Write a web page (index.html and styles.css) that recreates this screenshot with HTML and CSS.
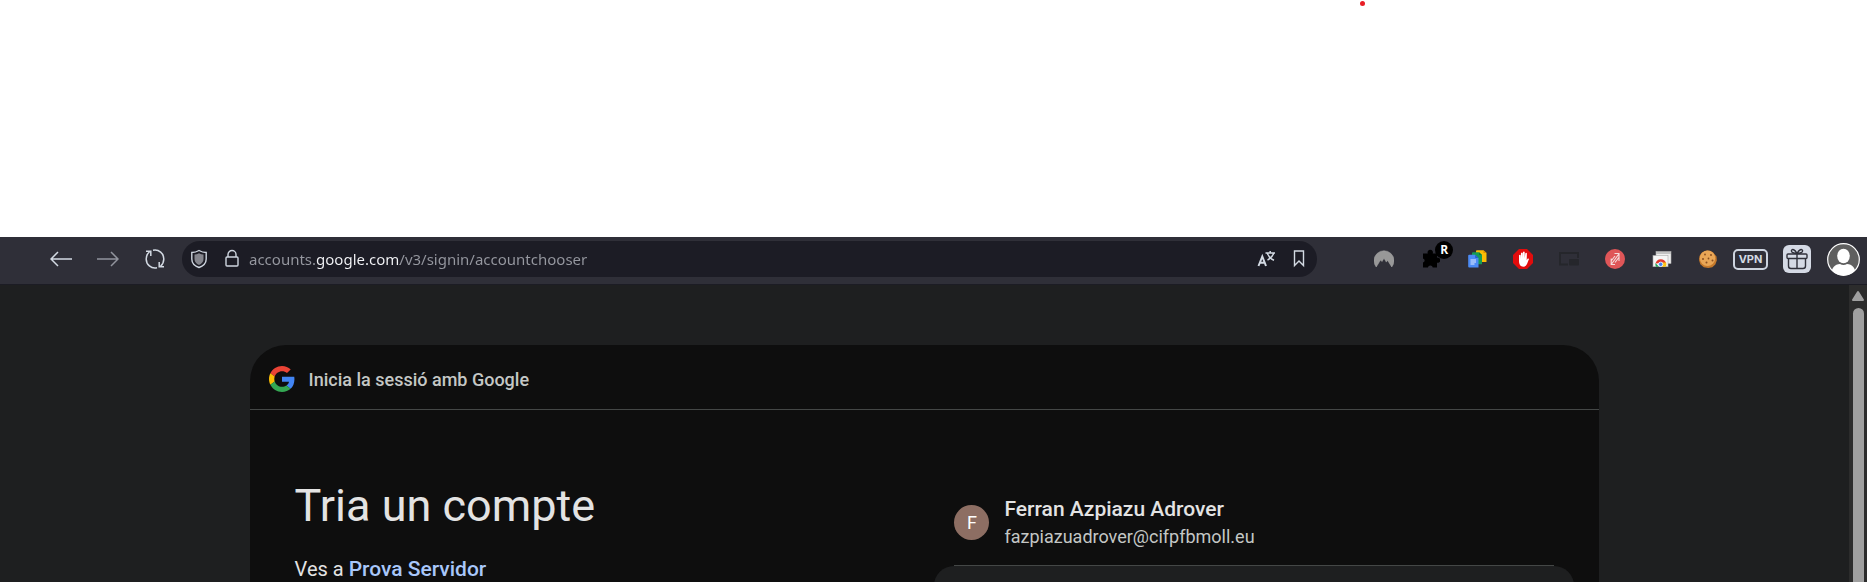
FILE: index.html
```html
<!DOCTYPE html>
<html lang="ca">
<head>
<meta charset="utf-8">
<title>Inicia la sessió</title>
<link rel="stylesheet" href="styles.css">
</head>
<body>
<div class="blank"><span class="dot"></span></div>
<header class="toolbar">
  <nav class="nav">
    <button class="icon" aria-label="Enrere"><svg width="22" height="20" viewBox="0 0 22 20" fill="none" stroke="#d3dae3" stroke-width="1.5"><path d="M22 10H1M8 3L1 10l7 7"/></svg></button>
    <button class="icon" aria-label="Endavant"><svg width="22" height="20" viewBox="0 0 22 20" fill="none" stroke="#91949d" stroke-width="1.5"><path d="M0 10h21M14 3l7 7-7 7"/></svg></button>
    <button class="icon" aria-label="Actualitza"><svg width="22" height="20" viewBox="0 0 22 20" fill="none" stroke="#d3dae3" stroke-width="1.5"><path d="M9 1.200C15 0 19.800 4.500 19.800 10c0 3-1.300 5.500-3.300 7.300M13 18.800C7 20 2.200 15.500 2.200 10c0-3 1.300-5.500 3.300-7.300M2 2.200h4.800V7M20 17.800h-4.800V13"/></svg></button>
  </nav>
  <div class="address">
    <button class="icon" aria-label="Protecció"><svg width="18" height="20" viewBox="0 0 18 20"><path d="M9 1.500c2.500 1.500 4.800 2 7.200 2V10c0 4-3 7-7.200 8.500C4.800 17 1.800 14 1.800 10V3.500c2.400 0 4.700-.5 7.200-2z" fill="none" stroke="#ced5df" stroke-width="1.400"/><path d="M9 4.300c1.600.8 3 1.200 4.500 1.300V10c0 2.800-1.700 4.700-4.500 6-2.800-1.300-4.500-3.200-4.500-6V5.600C6 5.500 7.400 5.100 9 4.300z" fill="#85868e"/></svg></button>
    <button class="icon lock" aria-label="Informació del lloc"><svg width="14" height="20" viewBox="0 0 14 20" fill="none" stroke="#ced5df" stroke-width="1.400"><rect x="1" y="8" width="12" height="9" rx="1"/><path d="M3 8V5.500a4 4 0 0 1 8 0V8"/></svg></button>
    <input class="url" type="text" aria-label="Adreça" value="accounts.google.com/v3/signin/accountchooser">
    <button class="icon translate" aria-label="Tradueix"><svg width="18" height="20" viewBox="0 0 18 20" fill="none" stroke="#d3dae3"><path d="M1.500 17L5.300 7.500 9 17M3 13.700h4.800" stroke-width="2"/><path d="M8.500 4H18M13.200 2v2M10.500 4.500c1 3 3.500 5.500 6.500 6.700M16.500 4.500c-1 3-3 5-6 6.700" stroke-width="1.500"/></svg></button>
    <button class="icon" aria-label="Afegeix a les adreces d'interès"><svg width="12" height="20" viewBox="0 0 12 20" fill="none" stroke="#d3dae3" stroke-width="1.400"><path d="M1.500 2h9v14.500L6 12l-4.500 4.500z"/></svg></button>
  </div>
  <div class="extensions">
    <button class="icon" aria-label="NordVPN"><svg width="20" height="20" viewBox="0 0 20 20"><path d="M2.200 18A10 10 0 1 1 17.800 18l-4.300-6.800-1.200 1.900L10 9.200 8 12.600l-1.500-1.500z" fill="#989898" stroke="#aaa" stroke-width=".5"/></svg></button>
    <button class="icon puzzle" aria-label="Extensió"><svg width="20" height="20" viewBox="0 0 20 20"><path d="M3 4.500h4.800a2.700 2.700 0 1 1 4.900 0H17v4.200a2.600 2.600 0 1 1 0 5V18.500h-4.200a2.500 2.500 0 0 0-4.900 0H3v-5a2.100 2.100 0 0 0 0-4.100z" fill="#000"/></svg><span class="badge">R</span></button>
    <button class="icon" aria-label="Documents"><svg width="20" height="20" viewBox="0 0 20 20"><path d="M10 1.200h6.500L19.500 4v9H10q-1 0-1-1V2.200q0-1 1-1z" fill="#fbbc04"/><path d="M16.500 1.200l3 2.800h-3z" fill="#d98c00"/><path d="M6 3.200h6L15 6v9.200H5v-11q0-1 1-1z" fill="#159b55"/><path d="M12 3.200L15 6h-3z" fill="#0c7a40"/><path d="M2.200 5.700h6L11.500 9v9.500H2.200q-1 0-1-1V6.700q0-1 1-1z" fill="#4c8bf5"/><path d="M8.200 5.700L11.500 9H8.200z" fill="#2461c9"/><path d="M3.500 11h5.500M3.500 13h5.500M3.500 15h4" stroke="#e8f0fe"/></svg></button>
    <button class="icon" aria-label="Blocador d'anuncis"><svg width="20" height="20" viewBox="0 0 20 20"><path d="M6 0h8l6 6v8l-6 6H6l-6-6V6z" fill="#e20c0c"/><path d="M6 12V6.200q1-.9 1.600 0V10L8 4q1-.9 1.700 0V9L10 3q1-.8 1.700 0l.1 6 .5-4.800q.9-.7 1.600.1l-.2 7 1-1.700q1-.5 1.300.5L14 15q-1 2.700-3.700 2.700C7.500 17.700 6 15.500 6 12z" fill="#fff"/></svg></button>
    <button class="icon" aria-label="Imatge en imatge"><svg width="20" height="20" viewBox="0 0 20 20"><path d="M9 15.500H1V4h18v5" fill="none" stroke="#25262b" stroke-width="1.800"/><rect x="10" y="10" width="10" height="6.500" rx="1" fill="#25262b"/></svg></button>
    <button class="icon" aria-label="Enllaços"><svg width="20" height="20" viewBox="0 0 20 20"><circle cx="10" cy="10" r="10" fill="#df5658"/><path d="M6.200 9.500v6H10M6.200 15.500L14 4.800M9.500 4.500H14V12M6.500 11.500L10 7M10 13.500L13.800 8.500" fill="none" stroke="#f4dcdc" stroke-width="1.100"/></svg></button>
    <button class="icon" aria-label="Finestres"><svg width="20" height="20" viewBox="0 0 20 20"><rect x="4" y="2.500" width="15" height="12" fill="#eee" stroke="#aaa" stroke-width=".6"/><path d="M4 3h15v2H4z" fill="#c2c2c2"/><rect x="1" y="6.500" width="15" height="11.200" fill="#f5f5f5" stroke="#aaa" stroke-width=".6"/><path d="M3.500 14.500a5.500 5.500 0 0 1 10.500-.5L9 14z" fill="#e33b2e"/><path d="M3.500 14l3.500 3.700H4a5 5 0 0 1-.5-3.700z" fill="#26a658"/><path d="M10 13.500h4.200q.5 2-.5 4.200H10z" fill="#fbc116"/><circle cx="8.700" cy="15.300" r="2.200" fill="#4285f4" stroke="#fff" stroke-width=".8"/></svg></button>
    <button class="icon" aria-label="Galetes"><svg width="20" height="20" viewBox="0 0 20 20"><path d="M9 1.500l3 .3 3 1.500 1.500 2 2 2.200.3 4-1.500 4-3 2.700-4 .8-4.500-.7-3.500-3L1 11l.5-4L4 3.500z" fill="#c5792b"/><circle cx="9.500" cy="9.300" r="7.700" fill="#e9a656"/><g fill="#8a4f20"><circle cx="7" cy="5.500" r=".9"/><circle cx="13" cy="6" r="1"/><circle cx="5" cy="10" r="1"/><circle cx="10.500" cy="9.500" r=".9"/><circle cx="14.500" cy="11.500" r="1"/><circle cx="8.500" cy="13.500" r="1"/></g></svg></button>
  </div>
  <button class="vpn">VPN</button>
  <button class="gift" aria-label="Regal"><svg width="22" height="22" viewBox="0 0 22 22" fill="none" stroke="#30313b" stroke-width="1.400"><rect x="1" y="6" width="20" height="4.500" rx="1"/><path d="M2.500 10.500V18a2.500 2.500 0 0 0 2.500 2.500h12a2.500 2.500 0 0 0 2.500-2.500v-7.500M11 6v14.500M11 5.500C9 1.500 6 .5 5.500 2.500S8 5.500 11 5.500zM11 5.500c2-4 5-5 5.500-3S14 5.500 11 5.500z"/></svg></button>
  <button class="icon" aria-label="Perfil"><svg width="33" height="33" viewBox="0 0 33 33"><defs><clipPath id="face"><circle cx="16.500" cy="16.500" r="15.800"/></clipPath></defs><circle cx="16.500" cy="16.500" r="15.800" fill="#5f5f5f"/><g fill="#fff" clip-path="url(#face)"><ellipse cx="16.500" cy="13" rx="6.300" ry="7.300"/><path d="M4 33c0-8 4-12 9-12q3.500 1.800 7 0c5 0 9 4 9 12z"/></g><circle cx="16.500" cy="16.500" r="15.800" fill="none" stroke="#fff" stroke-width="1.200"/></svg></button>
</header>
<div class="viewport">
  <main class="page">
    <section class="card">
      <div class="brand">
        <svg width="26" height="26" viewBox="0 0 48 48"><path fill="#ea4335" d="M24 9.500c3.540 0 6.710 1.220 9.210 3.600l6.850-6.850C35.900 2.380 30.470 0 24 0 14.620 0 6.510 5.380 2.560 13.220l7.980 6.190C12.430 13.720 17.740 9.500 24 9.500z"/><path fill="#4285f4" d="M46.980 24.550c0-1.570-.15-3.090-.38-4.550H24v9.020h12.940c-.58 2.960-2.260 5.480-4.780 7.180l7.730 6c4.510-4.180 7.090-10.360 7.090-17.650z"/><path fill="#fbbc05" d="M10.530 28.590c-.48-1.450-.76-2.990-.76-4.590s.27-3.140.76-4.590l-7.980-6.190C.92 16.460 0 20.120 0 24c0 3.880.92 7.540 2.560 10.780l7.970-6.190z"/><path fill="#34a853" d="M24 48c6.480 0 11.930-2.130 15.890-5.810l-7.730-6c-2.150 1.450-4.920 2.300-8.160 2.300-6.260 0-11.570-4.220-13.470-9.910l-7.980 6.190C6.510 42.620 14.620 48 24 48z"/></svg>
        <span>Inicia la sessió amb Google</span>
      </div>
      <div class="content">
        <div class="intro">
          <h1 class="title">Tria un compte</h1>
          <p class="subtitle">Ves a <a class="link" href="#">Prova Servidor</a></p>
        </div>
        <div class="accounts">
          <button class="account">
            <span class="avatar">F</span>
            <span class="who"><span class="name">Ferran Azpiazu Adrover</span><span class="email">fazpiazuadrover@cifpfbmoll.eu</span></span>
          </button>
          <button class="other" aria-label="Utilitza un altre compte"></button>
        </div>
      </div>
    </section>
  </main>
  <div class="scrollbar">
    <svg width="14" height="12" viewBox="0 0 14 12"><path d="M7 2l5 8H2z" fill="#9f9f9f" stroke="#9f9f9f" stroke-width="2" stroke-linejoin="round"/></svg>
    <div class="thumb"></div>
  </div>
</div>
</body>
</html>
```

FILE: styles.css
```css
* { box-sizing: border-box; }

body {
  margin: 0;
  height: 100vh;
  overflow: hidden;
  display: flex;
  flex-direction: column;
  background: #fff;
  font-family: "Open Sans", "Noto Sans", sans-serif;
}

button {
  border: 0;
  padding: 0;
  background: none;
  font-family: inherit;
  text-align: left;
}

.blank {
  position: relative;
  flex: 0 0 237px;
}

.dot {
  position: absolute;
  top: 1px;
  left: 1360px;
  width: 5px;
  height: 5px;
  border-radius: 50%;
  background: #e81e25;
}

.toolbar {
  flex: none;
  display: flex;
  align-items: center;
  height: 48px;
  padding: 0 7px 3px 50px;
  background: #2f2f38;
  border-bottom: 1px solid #1c1c24;
}

.icon {
  flex: none;
  display: flex;
}

.nav {
  display: flex;
  gap: 25px;
  margin-right: 16px;
}

.address {
  flex: 1;
  display: flex;
  align-items: center;
  height: 36px;
  margin-right: 57px;
  padding: 0 12px 0 8px;
  border-radius: 18px;
  background: #1c1c25;
}

.lock { margin: 0 10px 0 17px; }
.translate { margin-right: 18px; }

.url {
  flex: 1;
  min-width: 0;
  height: 24px;
  border: 0;
  padding: 0;
  outline: 0;
  font-family: "Noto Sans", sans-serif;
  font-size: 15px;
  color: transparent;
  background: linear-gradient(90deg, #9698a0 67px, #f4f5f8 67px 151px, #9698a0 151px);
  background-clip: text;
  -webkit-background-clip: text;
}

.extensions {
  display: flex;
  justify-content: space-between;
  width: 344px;
  margin-right: 15px;
}

.puzzle { position: relative; }

.badge {
  position: absolute;
  top: -8px;
  left: 15px;
  width: 18px;
  height: 18px;
  border-radius: 50%;
  background: #000;
  color: #fff;
  font-size: 12px;
  font-weight: 700;
  line-height: 18px;
  text-align: center;
}

.vpn {
  width: 35px;
  height: 21px;
  margin-right: 15px;
  border: 2px solid #cdd4df;
  border-radius: 5px;
  color: #d3dae3;
  font-family: Inter, sans-serif;
  font-size: 11px;
  font-weight: 700;
  line-height: 17px;
  text-align: center;
}

.gift {
  display: flex;
  align-items: center;
  justify-content: center;
  width: 28px;
  height: 28px;
  margin-right: 16px;
  border-radius: 6px;
  background: #d5dae5;
}

.viewport {
  flex: 1;
  min-height: 0;
  display: flex;
}

.page {
  flex: 1;
  padding-top: 60px;
  overflow: hidden;
  background: #1e1f20;
}

.card {
  width: 73%;
  min-height: 480px;
  margin: 0 auto;
  border-radius: 36px;
  background: #0e0e0e;
}

.brand {
  display: flex;
  align-items: center;
  gap: 14px;
  height: 65px;
  padding: 4px 19px 0;
  border-bottom: 1px solid #444746;
  color: #c4c7c5;
  font-family: Roboto, sans-serif;
  font-size: 18px;
  font-weight: 500;
}

.content {
  display: grid;
  grid-template-columns: 1fr 1fr;
  gap: 60px;
  padding: 68px 45px;
}

.title {
  margin: 0;
  color: #e3e3e3;
  font-family: Roboto, sans-serif;
  font-size: 45px;
  font-weight: 400;
  line-height: 56px;
}

.subtitle {
  margin: 21px 0 0;
  color: #e3e3e3;
  font-family: Roboto, sans-serif;
  font-size: 20px;
  line-height: 28px;
}

.link {
  color: #a8c7fa;
  font-size: 21px;
  font-weight: 500;
  text-decoration: none;
}

.accounts {
  display: flex;
  flex-direction: column;
  padding-top: 14px;
}

.account {
  display: flex;
  align-items: center;
  gap: 15px;
  height: 74px;
  padding-bottom: 12px;
  border-bottom: 1px solid #444746;
  font-family: Roboto, sans-serif;
}

.avatar {
  width: 35px;
  height: 35px;
  border-radius: 50%;
  background: #8d6e63;
  color: #fff;
  font-size: 18px;
  line-height: 35px;
  text-align: center;
}

.who {
  display: flex;
  flex-direction: column;
}

.name {
  color: #e3e3e3;
  font-size: 21px;
  font-weight: 500;
  line-height: 28px;
}

.email {
  color: #c4c7c5;
  font-size: 18px;
  line-height: 28px;
}

.other {
  height: 80px;
  margin: 0 -20px;
  border-radius: 20px;
  background: #1e1f20;
}

.scrollbar {
  flex: none;
  display: flex;
  flex-direction: column;
  align-items: center;
  gap: 6px;
  width: 18px;
  padding-top: 5px;
  background: #2c2c2c;
}

.thumb {
  flex: 1;
  width: 11px;
  border-radius: 6px 6px 0 0;
  background: #9f9f9f;
}
```
